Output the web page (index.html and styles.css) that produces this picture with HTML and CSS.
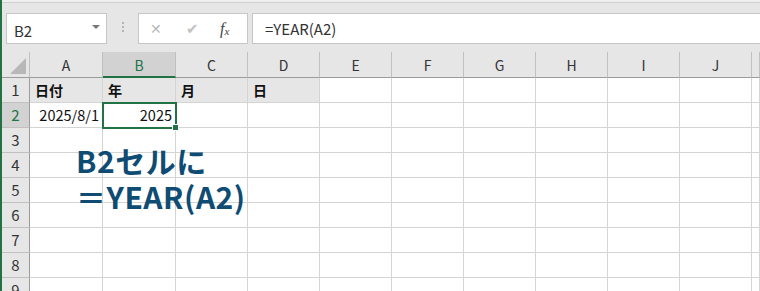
FILE: index.html
```html
<!DOCTYPE html>
<html>
  <head>
    <title>YEAR関数</title>
    <link rel="stylesheet" href="styles.css">
  </head>
  <body>
    <div class="app">
      <div class="formula-row">
        <div class="name-box">
          <span class="name-text">B2</span>
          <span class="name-arrow"></span>
        </div>
        <div class="grip">
          <span></span><span></span><span></span>
        </div>
        <div class="fn-box">
          <span class="fn-icon cancel">&#x2715;</span>
          <span class="fn-icon enter">&#x2714;</span>
          <span class="fn-icon fx"><i>f</i><sub>x</sub></span>
        </div>
        <div class="formula-box">=YEAR(A2)</div>
      </div>

      <div class="sheet">
        <div class="corner"><span class="corner-tri"></span></div>
        <div class="col-head">A</div>
        <div class="col-head selected">B</div>
        <div class="col-head">C</div>
        <div class="col-head">D</div>
        <div class="col-head">E</div>
        <div class="col-head">F</div>
        <div class="col-head">G</div>
        <div class="col-head">H</div>
        <div class="col-head">I</div>
        <div class="col-head">J</div>
        <div class="col-head">&nbsp;</div>

        <div class="row-head">1</div>
        <div class="cell head-cell">日付</div>
        <div class="cell head-cell">年</div>
        <div class="cell head-cell">月</div>
        <div class="cell head-cell">日</div>
        <div class="cell"></div><div class="cell"></div><div class="cell"></div><div class="cell"></div><div class="cell"></div><div class="cell"></div><div class="cell"></div>

        <div class="row-head selected">2</div>
        <div class="cell num">2025/8/1</div>
        <div class="cell num active">2025<span class="fill-handle"></span></div>
        <div class="cell"></div><div class="cell"></div><div class="cell"></div><div class="cell"></div><div class="cell"></div><div class="cell"></div><div class="cell"></div><div class="cell"></div><div class="cell"></div>

        <div class="row-head">3</div>
        <div class="cell"></div><div class="cell"></div><div class="cell"></div><div class="cell"></div><div class="cell"></div><div class="cell"></div><div class="cell"></div><div class="cell"></div><div class="cell"></div><div class="cell"></div><div class="cell"></div>
        <div class="row-head">4</div>
        <div class="cell"></div><div class="cell"></div><div class="cell"></div><div class="cell"></div><div class="cell"></div><div class="cell"></div><div class="cell"></div><div class="cell"></div><div class="cell"></div><div class="cell"></div><div class="cell"></div>
        <div class="row-head">5</div>
        <div class="cell"></div><div class="cell"></div><div class="cell"></div><div class="cell"></div><div class="cell"></div><div class="cell"></div><div class="cell"></div><div class="cell"></div><div class="cell"></div><div class="cell"></div><div class="cell"></div>
        <div class="row-head">6</div>
        <div class="cell"></div><div class="cell"></div><div class="cell"></div><div class="cell"></div><div class="cell"></div><div class="cell"></div><div class="cell"></div><div class="cell"></div><div class="cell"></div><div class="cell"></div><div class="cell"></div>
        <div class="row-head">7</div>
        <div class="cell"></div><div class="cell"></div><div class="cell"></div><div class="cell"></div><div class="cell"></div><div class="cell"></div><div class="cell"></div><div class="cell"></div><div class="cell"></div><div class="cell"></div><div class="cell"></div>
        <div class="row-head">8</div>
        <div class="cell"></div><div class="cell"></div><div class="cell"></div><div class="cell"></div><div class="cell"></div><div class="cell"></div><div class="cell"></div><div class="cell"></div><div class="cell"></div><div class="cell"></div><div class="cell"></div>
        <div class="row-head">9</div>
        <div class="cell"></div><div class="cell"></div><div class="cell"></div><div class="cell"></div><div class="cell"></div><div class="cell"></div><div class="cell"></div><div class="cell"></div><div class="cell"></div><div class="cell"></div><div class="cell"></div>

        <div class="callout">B2セルに<br>＝YEAR(A2)</div>
      </div>
    </div>
  </body>
</html>
```

FILE: styles.css
```css
body {
  margin: 0;
  width: 760px;
  height: 291px;
  overflow: hidden;
  background-color: #ffffff;
  font-family: "Noto Sans CJK JP", "Noto Sans", sans-serif;
}
.app {
  border-left: 2px solid #217346;
  height: 291px;
  background-color: #e6e6e6;
}
.formula-row {
  height: 52px;
  box-sizing: border-box;
  border-top: 2px solid #efefef;
  display: flex;
  align-items: flex-start;
  padding-top: 10px;
  padding-left: 4px;
  background-color: #e6e6e6;
  box-shadow: inset 0 1px 0 #cfcfcf;
}
.name-box {
  width: 101px;
  height: 31px;
  box-sizing: border-box;
  margin-top: 1px;
  background-color: #ffffff;
  border: 1px solid #c6c6c6;
  display: flex;
  align-items: center;
  justify-content: space-between;
  padding: 0 6px 0 7px;
}
.name-text {
  font-size: 15px;
  color: #333333;
  padding-top: 3px;
}
.name-arrow {
  width: 0;
  height: 0;
  border-left: 4px solid transparent;
  border-right: 4px solid transparent;
  border-top: 4px solid #777777;
  margin-top: -3px;
}
.grip {
  width: 31px;
  display: flex;
  flex-direction: column;
  align-items: center;
  gap: 2px;
  padding-top: 10px;
}
.grip span {
  width: 2px;
  height: 2px;
  background-color: #b4b4b4;
}
.fn-box {
  width: 110px;
  height: 31px;
  box-sizing: border-box;
  margin-top: 1px;
  background-color: #ffffff;
  border: 1px solid #c6c6c6;
  display: flex;
  align-items: center;
  padding-left: 11px;
}
.fn-icon {
  color: #b8b8b8;
  font-size: 15px;
  font-family: "DejaVu Sans", sans-serif;
}
.cancel {
  width: 36px;
  font-size: 14px;
}
.enter {
  width: 34px;
  font-size: 15px;
  color: #c2c2c2;
}
.fx {
  color: #444444;
  font-family: "Liberation Serif", serif;
  font-size: 16px;
}
.fx sub {
  font-size: 11px;
  font-style: italic;
  vertical-align: -1px;
}
.formula-box {
  flex: 1;
  height: 31px;
  box-sizing: border-box;
  margin-top: 1px;
  margin-left: 4px;
  background-color: #ffffff;
  border: 1px solid #c6c6c6;
  border-right: none;
  font-size: 15px;
  color: #333333;
  padding: 4px 0 0 12px;
}
.sheet {
  position: relative;
  display: grid;
  grid-template-columns: 28px 73px 73px 72px 72px 72px 72px 72px 72px 72px 72px 8px;
  grid-template-rows: 26px repeat(9, 25px);
  background-color: #ffffff;
}
.corner {
  position: relative;
  background-color: #e6e6e6;
  border-right: 1px solid #c0c0c0;
  border-bottom: 1px solid #9b9b9b;
}
.corner-tri {
  position: absolute;
  right: 3px;
  bottom: 3px;
  width: 0;
  height: 0;
  border-left: 16px solid transparent;
  border-bottom: 16px solid #b8b8b8;
}
.col-head {
  background-color: #e6e6e6;
  border-right: 1px solid #c0c0c0;
  border-bottom: 1px solid #9b9b9b;
  text-align: center;
  font-size: 14px;
  line-height: 26px;
  color: #333333;
}
.col-head.selected {
  background-color: #d2d2d2;
  border-bottom: 2px solid #217346;
  color: #217346;
}
.row-head {
  background-color: #e6e6e6;
  border-right: 1px solid #9b9b9b;
  border-bottom: 1px solid #c0c0c0;
  text-align: center;
  font-size: 15px;
  line-height: 24px;
  color: #333333;
}
.row-head.selected {
  background-color: #d2d2d2;
  color: #217346;
}
.cell {
  position: relative;
  border-right: 1px solid #d4d4d4;
  border-bottom: 1px solid #d4d4d4;
  font-size: 14px;
  line-height: 24px;
  color: #111111;
  padding: 0 3px;
  white-space: nowrap;
}
.head-cell {
  background-color: #e6e6e6;
  font-weight: bold;
  padding-left: 5px;
}
.num {
  text-align: right;
  font-size: 14.5px;
}
.active {
  outline: 2px solid #217346;
  outline-offset: -1px;
  z-index: 1;
}
.fill-handle {
  position: absolute;
  right: -4px;
  bottom: -4px;
  width: 5px;
  height: 5px;
  background-color: #217346;
  border: 1px solid #ffffff;
}
.callout {
  position: absolute;
  left: 74px;
  top: 90px;
  font-size: 30px;
  font-weight: bold;
  line-height: 36px;
  color: #0f4c73;
  letter-spacing: 0.5px;
}
```
